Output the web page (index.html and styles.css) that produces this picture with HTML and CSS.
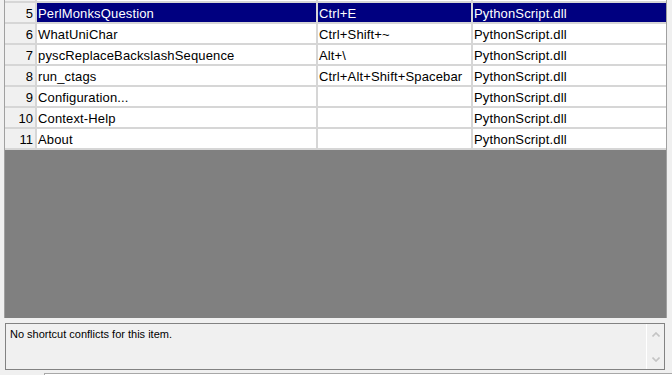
FILE: index.html
```html
<!DOCTYPE html>
<html lang="en">
<head>
  <meta charset="UTF-8">
  <title>Shortcut Mapper</title>
  <link rel="stylesheet" href="styles.css">
</head>
<body>
  <div class="grid">
    <div class="row cut"><div class="num"></div><div></div><div></div><div></div></div>
    <div class="row sel"><div class="num">5</div><div>PerlMonksQuestion</div><div>Ctrl+E</div><div>PythonScript.dll</div></div>
    <div class="row"><div class="num">6</div><div>WhatUniChar</div><div>Ctrl+Shift+~</div><div>PythonScript.dll</div></div>
    <div class="row"><div class="num">7</div><div>pyscReplaceBackslashSequence</div><div>Alt+\</div><div>PythonScript.dll</div></div>
    <div class="row"><div class="num">8</div><div>run_ctags</div><div>Ctrl+Alt+Shift+Spacebar</div><div>PythonScript.dll</div></div>
    <div class="row"><div class="num">9</div><div>Configuration...</div><div></div><div>PythonScript.dll</div></div>
    <div class="row"><div class="num">10</div><div>Context-Help</div><div></div><div>PythonScript.dll</div></div>
    <div class="row"><div class="num">11</div><div>About</div><div></div><div>PythonScript.dll</div></div>
    <div class="fill"></div>
  </div>
  <div class="info">
    <div class="msg">No shortcut conflicts for this item.</div>
    <div class="vscroll">
      <svg width="8" height="5" viewBox="0 0 8 5"><path d="M0.5 4.5 L4 1 L7.5 4.5" fill="none" stroke="#c4c4c4" stroke-width="1.6"/></svg>
      <svg width="8" height="5" viewBox="0 0 8 5"><path d="M0.5 0.5 L4 4 L7.5 0.5" fill="none" stroke="#c4c4c4" stroke-width="1.6"/></svg>
    </div>
  </div>
  <div class="next"></div>
</body>
</html>
```

FILE: styles.css
```css
body { margin: 0; background: #f0f0f0; font-family: "Liberation Sans", Arial, sans-serif; overflow: hidden; }
.grid { display: flex; flex-direction: column; margin-left: 4px; width: 661px; height: 318px; border-left: 1px solid #a0a0a0; border-right: 1px solid #a0a0a0; }
.row { display: grid; grid-template-columns: 30px 279px 153px 193px; column-gap: 2px; height: 19px; background: #d6d6d6; border-top: 2px solid #d6d6d6; font-size: 13px; line-height: 21px; letter-spacing: 0.15px; color: #000; }
.row > div { background: #fff; padding-left: 1px; white-space: nowrap; overflow: hidden; }
.row > .num { background: #f0f0f0; text-align: right; padding: 0 2px 0 0; letter-spacing: 0; }
.row.cut { height: 1px; border-top: 0; }
.row.sel > div { background: #000080; color: #fff; }
.row.sel > .num { background: #f0f0f0; color: #000; }
.fill { flex: 1; background: #808080; border-top: 2px solid #d6d6d6; }
.info { display: flex; box-sizing: border-box; margin: 5px 0 0 5px; width: 660px; height: 47px; border: 1px solid #828282; font-size: 11px; }
.msg { flex: 1; padding: 4px 0 0 4px; line-height: 13px; color: #000; }
.vscroll { width: 17px; border-left: 1px solid #fff; display: flex; flex-direction: column; justify-content: space-between; align-items: center; padding: 8px 0 7px; }
.next { margin: 3px 0 0 44px; height: 4px; border-top: 1px solid #a8a8a8; border-left: 1px solid #a8a8a8; background: #fff; }
```
